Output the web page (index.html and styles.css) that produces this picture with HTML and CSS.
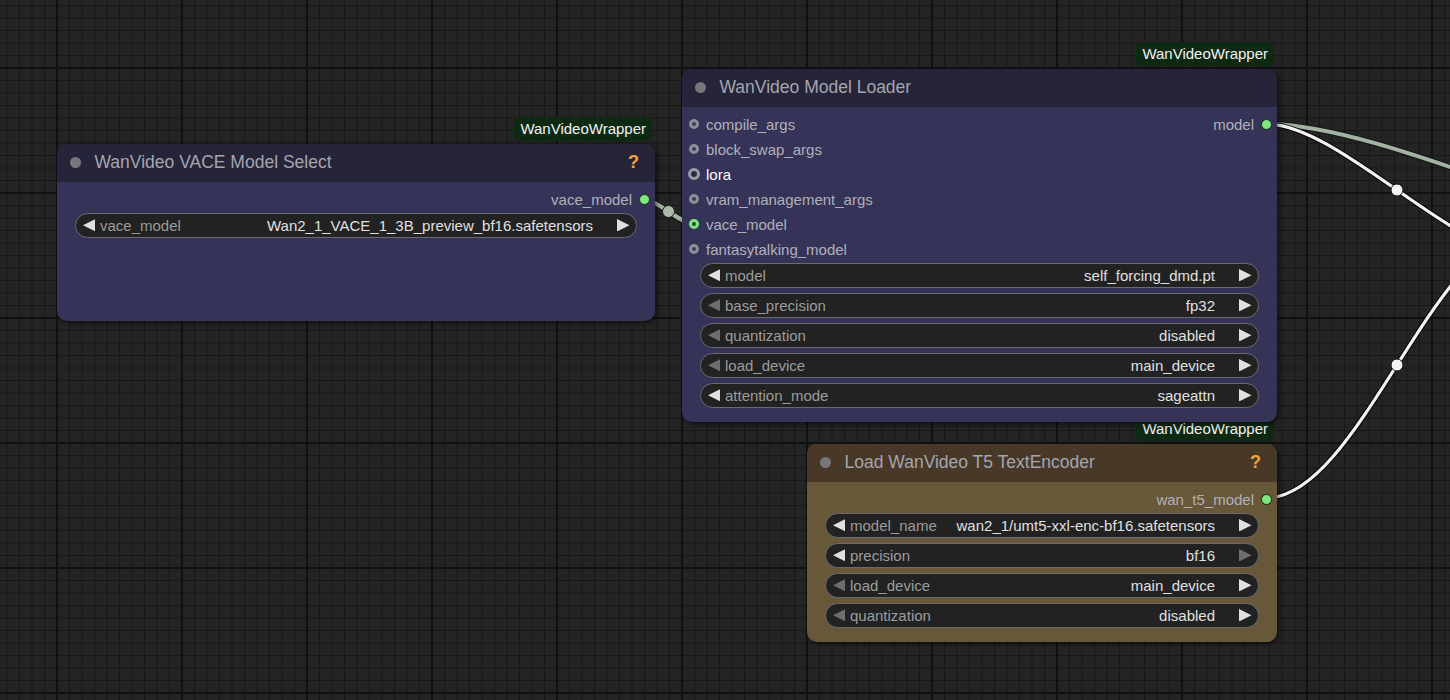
FILE: index.html
```html
<!DOCTYPE html>
<html lang="en">
<head>
<meta charset="utf-8">
<title>WanVideo nodes</title>
<link rel="stylesheet" href="styles.css">
</head>
<body>
<div class="canvas">
  <svg class="links" width="1450" height="700" viewBox="0 0 1450 700">
    <g class="link link-green">
      <path class="edge" d="M643,199 C657,199 680,224 694,224"/>
      <path class="core" d="M643,199 C657,199 680,224 694,224"/>
      <circle class="mid" cx="668.5" cy="211.5" r="6"/>
    </g>
    <g class="link link-green">
      <path class="edge" d="M1266,124 C1391,124 1625,250 1750,250"/>
      <path class="core" d="M1266,124 C1391,124 1625,250 1750,250"/>
    </g>
    <g class="link link-white">
      <path class="edge" d="M1266,124 C1339,124 1455,256 1528,256"/>
      <path class="core" d="M1266,124 C1339,124 1455,256 1528,256"/>
      <circle class="mid" cx="1397" cy="190" r="6"/>
    </g>
    <g class="link link-white">
      <path class="edge" d="M1266,498 C1359,498 1435,232 1528,232"/>
      <path class="core" d="M1266,498 C1359,498 1435,232 1528,232"/>
      <circle class="mid" cx="1397" cy="365" r="6"/>
    </g>
  </svg>

  <!-- WanVideo VACE Model Select -->
  <div class="node blue n-vace">
    <div class="badge">WanVideoWrapper</div>
    <div class="title">
      <span class="tdot"></span>
      <span class="ttext">WanVideo VACE Model Select</span>
      <span class="help">?</span>
    </div>
    <div class="body">
      <div class="slots">
        <div class="row">
          <div class="out"><span class="olabel">vace_model</span><span class="odot"></span></div>
        </div>
      </div>
      <div class="widgets">
        <div class="widget">
          <svg class="arr" viewBox="0 0 12.5 12.5"><polygon class="on" points="12.5,0 0,6.25 12.5,12.5"/></svg>
          <span class="wlabel">vace_model</span>
          <span class="wvalue">Wan2_1_VACE_1_3B_preview_bf16.safetensors</span>
          <svg class="arr" viewBox="0 0 12.5 12.5"><polygon class="on" points="0,0 12.5,6.25 0,12.5"/></svg>
        </div>
      </div>
    </div>
  </div>

  <!-- WanVideo Model Loader -->
  <div class="node blue n-loader">
    <div class="badge">WanVideoWrapper</div>
    <div class="title">
      <span class="tdot"></span>
      <span class="ttext">WanVideo Model Loader</span>
    </div>
    <div class="body">
      <div class="slots">
        <div class="row">
          <div class="in"><span class="sdot"></span><span class="ilabel">compile_args</span></div>
          <div class="out"><span class="olabel">model</span><span class="odot"></span></div>
        </div>
        <div class="row">
          <div class="in"><span class="sdot"></span><span class="ilabel">block_swap_args</span></div>
        </div>
        <div class="row">
          <div class="in"><span class="sdot ring"></span><span class="ilabel bright">lora</span></div>
        </div>
        <div class="row">
          <div class="in"><span class="sdot"></span><span class="ilabel">vram_management_args</span></div>
        </div>
        <div class="row">
          <div class="in"><span class="sdot linked"></span><span class="ilabel">vace_model</span></div>
        </div>
        <div class="row">
          <div class="in"><span class="sdot"></span><span class="ilabel">fantasytalking_model</span></div>
        </div>
      </div>
      <div class="widgets">
        <div class="widget">
          <svg class="arr" viewBox="0 0 12.5 12.5"><polygon class="on" points="12.5,0 0,6.25 12.5,12.5"/></svg>
          <span class="wlabel">model</span>
          <span class="wvalue">self_forcing_dmd.pt</span>
          <svg class="arr" viewBox="0 0 12.5 12.5"><polygon class="on" points="0,0 12.5,6.25 0,12.5"/></svg>
        </div>
        <div class="widget">
          <svg class="arr" viewBox="0 0 12.5 12.5"><polygon class="off" points="12.5,0 0,6.25 12.5,12.5"/></svg>
          <span class="wlabel">base_precision</span>
          <span class="wvalue">fp32</span>
          <svg class="arr" viewBox="0 0 12.5 12.5"><polygon class="on" points="0,0 12.5,6.25 0,12.5"/></svg>
        </div>
        <div class="widget">
          <svg class="arr" viewBox="0 0 12.5 12.5"><polygon class="off" points="12.5,0 0,6.25 12.5,12.5"/></svg>
          <span class="wlabel">quantization</span>
          <span class="wvalue">disabled</span>
          <svg class="arr" viewBox="0 0 12.5 12.5"><polygon class="on" points="0,0 12.5,6.25 0,12.5"/></svg>
        </div>
        <div class="widget">
          <svg class="arr" viewBox="0 0 12.5 12.5"><polygon class="off" points="12.5,0 0,6.25 12.5,12.5"/></svg>
          <span class="wlabel">load_device</span>
          <span class="wvalue">main_device</span>
          <svg class="arr" viewBox="0 0 12.5 12.5"><polygon class="on" points="0,0 12.5,6.25 0,12.5"/></svg>
        </div>
        <div class="widget">
          <svg class="arr" viewBox="0 0 12.5 12.5"><polygon class="on" points="12.5,0 0,6.25 12.5,12.5"/></svg>
          <span class="wlabel">attention_mode</span>
          <span class="wvalue">sageattn</span>
          <svg class="arr" viewBox="0 0 12.5 12.5"><polygon class="on" points="0,0 12.5,6.25 0,12.5"/></svg>
        </div>
      </div>
    </div>
  </div>

  <!-- Load WanVideo T5 TextEncoder -->
  <div class="node yellow n-t5">
    <div class="badge">WanVideoWrapper</div>
    <div class="title">
      <span class="tdot"></span>
      <span class="ttext">Load WanVideo T5 TextEncoder</span>
      <span class="help">?</span>
    </div>
    <div class="body">
      <div class="slots">
        <div class="row">
          <div class="out"><span class="olabel">wan_t5_model</span><span class="odot"></span></div>
        </div>
      </div>
      <div class="widgets">
        <div class="widget">
          <svg class="arr" viewBox="0 0 12.5 12.5"><polygon class="on" points="12.5,0 0,6.25 12.5,12.5"/></svg>
          <span class="wlabel">model_name</span>
          <span class="wvalue">wan2_1/umt5-xxl-enc-bf16.safetensors</span>
          <svg class="arr" viewBox="0 0 12.5 12.5"><polygon class="on" points="0,0 12.5,6.25 0,12.5"/></svg>
        </div>
        <div class="widget">
          <svg class="arr" viewBox="0 0 12.5 12.5"><polygon class="on" points="12.5,0 0,6.25 12.5,12.5"/></svg>
          <span class="wlabel">precision</span>
          <span class="wvalue">bf16</span>
          <svg class="arr" viewBox="0 0 12.5 12.5"><polygon class="off" points="0,0 12.5,6.25 0,12.5"/></svg>
        </div>
        <div class="widget">
          <svg class="arr" viewBox="0 0 12.5 12.5"><polygon class="off" points="12.5,0 0,6.25 12.5,12.5"/></svg>
          <span class="wlabel">load_device</span>
          <span class="wvalue">main_device</span>
          <svg class="arr" viewBox="0 0 12.5 12.5"><polygon class="on" points="0,0 12.5,6.25 0,12.5"/></svg>
        </div>
        <div class="widget">
          <svg class="arr" viewBox="0 0 12.5 12.5"><polygon class="off" points="12.5,0 0,6.25 12.5,12.5"/></svg>
          <span class="wlabel">quantization</span>
          <span class="wvalue">disabled</span>
          <svg class="arr" viewBox="0 0 12.5 12.5"><polygon class="on" points="0,0 12.5,6.25 0,12.5"/></svg>
        </div>
      </div>
    </div>
  </div>
</div>
</body>
</html>
```

FILE: styles.css
```css
* { box-sizing: border-box; }

html, body {
  margin: 0;
  padding: 0;
}

body {
  width: 1450px;
  height: 700px;
  overflow: hidden;
  font-family: "Liberation Sans", Arial, sans-serif;
  background-color: #242424;
  background-image:
    linear-gradient(to right, #111111 0, #111111 2.5px, transparent 2.5px),
    linear-gradient(to bottom, #111111 0, #111111 2.5px, transparent 2.5px),
    linear-gradient(to right, #171717 0, #171717 1px, transparent 1px),
    linear-gradient(to bottom, #171717 0, #171717 1px, transparent 1px);
  background-size: 125px 125px, 125px 125px, 12.5px 12.5px, 12.5px 12.5px;
  background-position: 56px 0, 0 67px, 6.5px 0, 0 5px;
}

.canvas {
  position: relative;
  width: 1450px;
  height: 700px;
}

/* links */
.links {
  position: absolute;
  left: 0;
  top: 0;
  z-index: 0;
}
.link path { fill: none; }
.link .edge { stroke: #0c0c0c; stroke-width: 5.5; }
.link .core { stroke-width: 3.2; }
.link-white .core { stroke: #f4f4f4; }
.link-white .mid { fill: #f4f4f4; stroke: #111; stroke-width: 1; }
.link-green .core { stroke: #a3b3a3; stroke-width: 4; }
.link-green .edge { stroke-width: 6; stroke: #151a15; }
.link-green .mid { fill: #a9b8a9; stroke: #1a1f1a; stroke-width: 1; }

/* nodes */
.node {
  position: absolute;
  border-radius: 10px;
  box-shadow: 2px 2px 5px rgba(0, 0, 0, 0.55);
  display: flex;
  flex-direction: column;
}
.node.blue { background: #363358; }
.node.blue .title { background: #262439; }
.node.yellow { background: #675839; }
.node.yellow .title { background: #473827; }

.n-vace   { left: 57px;  top: 144px; width: 598px; height: 177px; z-index: 2; }
.n-loader { left: 682px; top: 69px;  width: 595px; height: 353px; z-index: 3; }
.n-t5     { left: 807px; top: 444px; width: 470px; height: 198px; z-index: 2; }

.badge {
  position: absolute;
  right: 3px;
  bottom: calc(100% + 3px);
  height: 24px;
  line-height: 24px;
  padding: 0 6px;
  border-radius: 6px;
  background: #0e2912;
  color: #f2f2f2;
  font-size: 15px;
  white-space: nowrap;
}

.title {
  height: 37.5px;
  flex: none;
  display: flex;
  align-items: center;
  padding-left: 12.5px;
  border-radius: 10px 10px 0 0;
}
.tdot {
  width: 11px;
  height: 11px;
  border-radius: 50%;
  background: #77777b;
  margin-right: 14px;
  flex: none;
}
.ttext {
  font-size: 17.5px;
  color: #a5a5ae;
  white-space: nowrap;
}
.help {
  margin-left: auto;
  margin-right: 16px;
  font-size: 18px;
  font-weight: bold;
  color: #f0a43a;
}

.body {
  padding-top: 5px;
  display: flex;
  flex-direction: column;
}

.slots { display: flex; flex-direction: column; }
.row {
  height: 25px;
  display: flex;
  align-items: center;
  padding: 0 5.5px 0 7px;
  font-size: 15px;
  white-space: nowrap;
}
.in { display: flex; align-items: center; }
.out { display: flex; align-items: center; margin-left: auto; }

.sdot {
  width: 10px;
  height: 10px;
  border-radius: 50%;
  border: 3px solid #8e8e98;
  background: #3e3d55;
  flex: none;
}
.sdot.ring {
  width: 12px;
  height: 12px;
  margin-left: -1px;
  margin-right: -1px;
  border: 3px solid #9c9ca4;
  background: #2c2b42;
}
.sdot.linked {
  border-color: #7ee87e;
  background: #23442a;
}
.ilabel {
  margin-left: 7px;
  color: #b0b0ba;
  line-height: 25px;
}
.ilabel.bright { color: #ffffff; }

.olabel {
  color: #b0b0ba;
  line-height: 25px;
  margin-right: 6.5px;
}
.odot {
  width: 11px;
  height: 11px;
  border-radius: 50%;
  background: #7ee87e;
  border: 1px solid #1a261a;
  flex: none;
}

/* widgets */
.widgets {
  margin-top: 1px;
  padding: 0 18px;
  display: flex;
  flex-direction: column;
  gap: 5px;
}
.widget {
  height: 25px;
  border-radius: 12.5px;
  background: #222222;
  border: 1px solid #6a6a70;
  display: flex;
  align-items: center;
  padding: 0 6.5px;
  font-size: 15px;
  white-space: nowrap;
}
.arr {
  width: 12.5px;
  height: 12.5px;
  flex: none;
}
.arr .on { fill: #e0e0e0; }
.arr .off { fill: #6e6e6e; }
.wlabel {
  margin-left: 5px;
  color: #9c9c9c;
}
.wvalue {
  margin-left: auto;
  margin-right: 24px;
  color: #e0e0e0;
}
```
